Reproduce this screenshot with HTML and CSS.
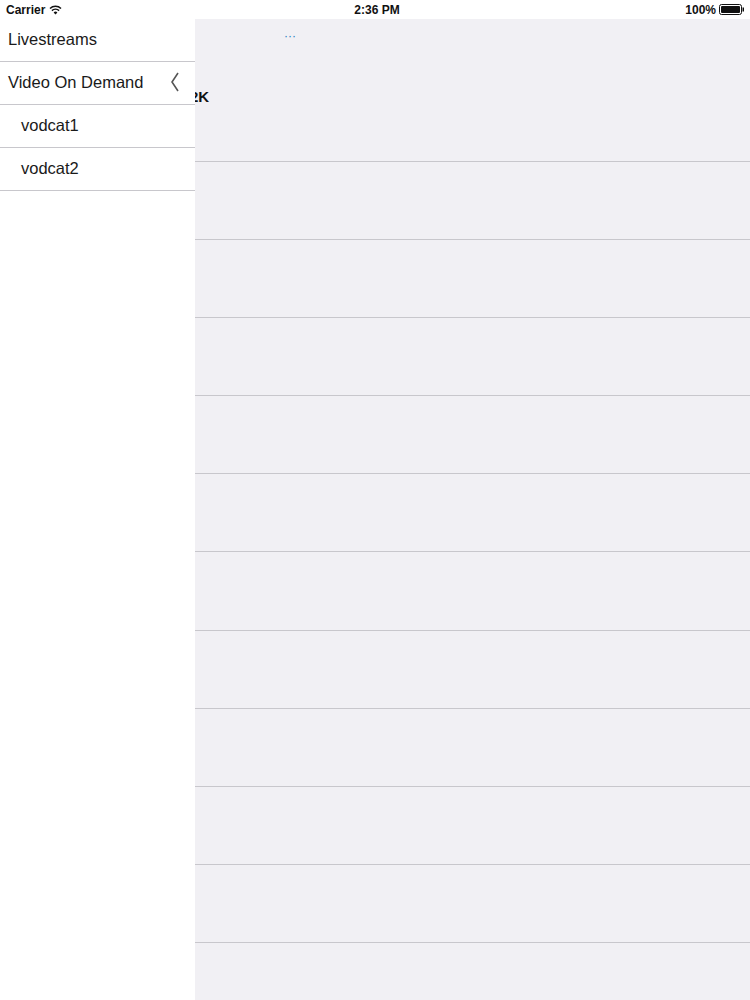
FILE: index.html
```html
<!DOCTYPE html>
<html>
<head>
<meta charset="utf-8">
<link rel="stylesheet" href="styles.css">
</head>
<body>
<div class="page">
  <div class="status">
    <div class="status-left">Carrier
      <svg class="wifi" width="13" height="10" viewBox="0 0 13 10"><path d="M6.5 9.5 L4.6 7.4 A2.8 2.8 0 0 1 8.4 7.4 Z" fill="#111"/><path d="M2.9 5.6 A5.2 5.2 0 0 1 10.1 5.6" stroke="#111" stroke-width="1.5" fill="none"/><path d="M1 3.5 A7.8 7.8 0 0 1 12 3.5" stroke="#111" stroke-width="1.5" fill="none"/></svg>
    </div>
    <div class="status-time">2:36 PM</div>
    <div class="status-right">100%
      <svg class="battery" width="25" height="11" viewBox="0 0 25 11"><rect x="0.5" y="0.5" width="22" height="10" rx="2" fill="none" stroke="#111"/><rect x="2" y="2" width="19" height="7" rx="1" fill="#111"/><rect x="23.5" y="3.5" width="1.5" height="4" fill="#111"/></svg>
    </div>
  </div>
  <div class="main">
    <div class="main-header">
      <div class="dots">···</div>
      <div class="title">2K</div>
    </div>
    <div class="row"></div>
    <div class="row"></div>
    <div class="row"></div>
    <div class="row"></div>
    <div class="row"></div>
    <div class="row"></div>
    <div class="row"></div>
    <div class="row"></div>
    <div class="row"></div>
    <div class="row"></div>
    <div class="row"></div>
  </div>
  <nav class="drawer">
    <div class="item">Livestreams</div>
    <div class="item">Video On Demand
      <svg class="chev" width="10" height="20" viewBox="0 0 10 20"><path d="M8 1 L2 10 L8 19" stroke="#555" stroke-width="1.6" fill="none"/></svg>
    </div>
    <div class="item sub">vodcat1</div>
    <div class="item sub">vodcat2</div>
  </nav>
</div>
</body>
</html>
```
FILE: styles.css
```css
html, body {
  margin: 0;
  padding: 0;
  background: #fff;
  font-family: "Helvetica Neue", "Liberation Sans", Arial, sans-serif;
  color: #111;
}
.page {
  position: relative;
  width: 750px;
  height: 1000px;
  overflow: hidden;
}
.status {
  height: 19px;
  display: flex;
  align-items: center;
  justify-content: space-between;
  padding: 0 6px;
  font-size: 12px;
  font-weight: bold;
  background: #fff;
  position: relative;
}
.status-left, .status-right {
  display: flex;
  align-items: center;
  gap: 4px;
  width: 120px;
}
.status-right {
  justify-content: flex-end;
  gap: 3px;
}
.status-time {
  flex: 1;
  text-align: center;
  padding-left: 4px;
}
.main {
  background: #f1f0f4;
  height: 981px;
}
.main-header {
  height: 142px;
  border-bottom: 1px solid #c8c7cc;
  position: relative;
}
.dots {
  position: absolute;
  left: 284px;
  top: 10px;
  font-size: 12px;
  color: #2680c2;
}
.title {
  position: absolute;
  left: 190px;
  top: 69px;
  font-size: 15px;
  font-weight: bold;
}
.row {
  height: 77px;
  border-bottom: 1px solid #c8c7cc;
}
.row:nth-child(7) {
  height: 78px;
}
.drawer {
  position: absolute;
  top: 19px;
  left: 0;
  width: 195px;
  height: 981px;
  background: #fff;
}
.item {
  box-sizing: border-box;
  height: 43px;
  border-bottom: 1px solid #c8c7cc;
  display: flex;
  align-items: center;
  justify-content: space-between;
  padding: 0 15px 2px 8px;
  font-size: 16.5px;
  color: #1a1a1a;
}
.item.sub {
  padding-left: 21px;
}
.chev {
  display: block;
}
```
